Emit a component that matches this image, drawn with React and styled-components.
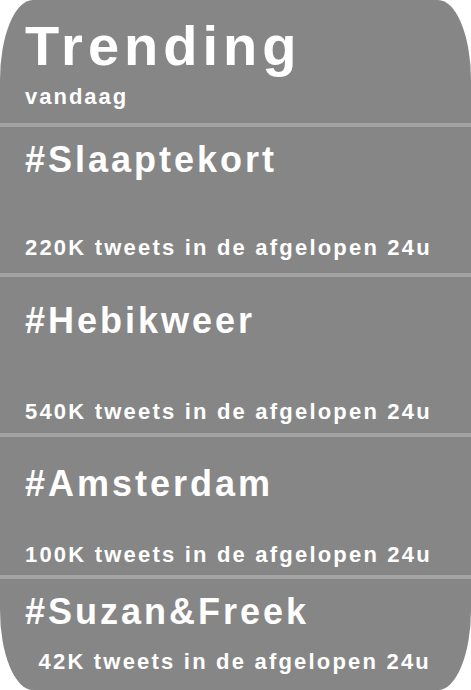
import React from 'react';
import styled, { createGlobalStyle } from 'styled-components';

const GlobalStyle = createGlobalStyle`
  html, body {
    margin: 0;
    padding: 0;
    background: #fff;
  }
  * {
    box-sizing: border-box;
  }
`;

const trends = [
  { tag: '#Slaaptekort', count: '220K', height: 150, padTop: 15, padBottom: 14 },
  { tag: '#Hebikweer', count: '540K', height: 160, padTop: 26, padBottom: 10 },
  { tag: '#Amsterdam', count: '100K', height: 142, padTop: 29, padBottom: 9 },
  { tag: '#Suzan&Freek', count: '42K', height: 111, padTop: 15, padBottom: 13 },
];

const Panel = styled.div`
  width: 471px;
  height: 690px;
  overflow: hidden;
  background: #868686;
  border-radius: 33px / 80px;
  display: flex;
  flex-direction: column;
  font-family: 'Liberation Sans', Arial, sans-serif;
  font-weight: bold;
  color: #fff;
`;

const Header = styled.header`
  height: 123px;
  padding: 18px 0 0 25px;
  display: flex;
  flex-direction: column;
  gap: 12px;
`;

const Title = styled.h1`
  margin: 0;
  font-size: 56px;
  line-height: 56px;
  letter-spacing: 5px;
  font-weight: bold;
`;

const Subtitle = styled.div`
  font-size: 22px;
  line-height: 22px;
  letter-spacing: 2px;
`;

const Trend = styled.section`
  flex: 0 0 auto;
  height: ${(p) => p.$height}px;
  border-top: 4px solid #a3a3a3;
  padding: ${(p) => p.$padTop}px 40px ${(p) => p.$padBottom}px 25px;
  display: flex;
  flex-direction: column;
  justify-content: space-between;
`;

const Tag = styled.div`
  font-size: 36px;
  line-height: 36px;
  letter-spacing: 3px;
`;

const Count = styled.div`
  font-size: 22px;
  line-height: 22px;
  letter-spacing: 2.2px;
  text-align: right;
  white-space: nowrap;
`;

export default function App() {
  return (
    <>
      <GlobalStyle />
      <Panel>
        <Header>
          <Title>Trending</Title>
          <Subtitle>vandaag</Subtitle>
        </Header>
        {trends.map((t) => (
          <Trend key={t.tag} $height={t.height} $padTop={t.padTop} $padBottom={t.padBottom}>
            <Tag>{t.tag}</Tag>
            <Count>{t.count} tweets in de afgelopen 24u</Count>
          </Trend>
        ))}
      </Panel>
    </>
  );
}
